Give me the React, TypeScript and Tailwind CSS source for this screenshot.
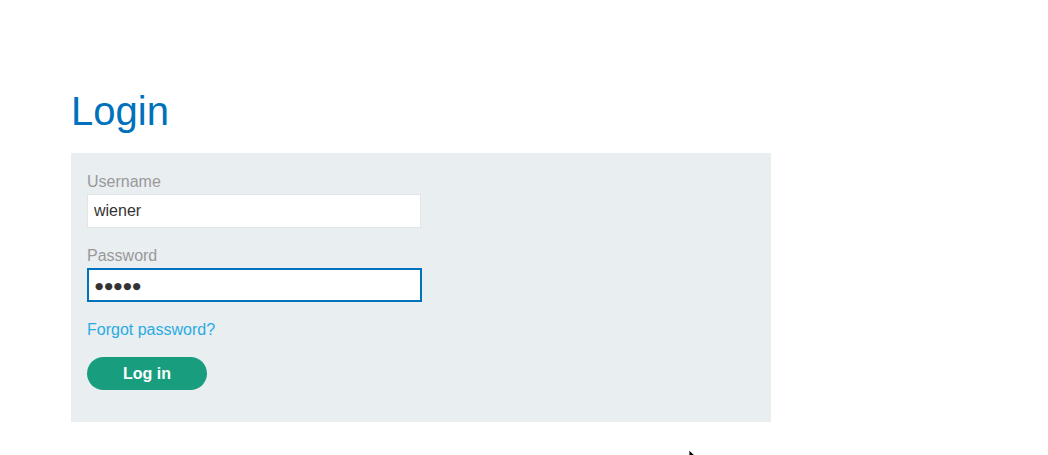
export default function App() {
  return (
    <div className="relative h-[455px] w-full overflow-hidden bg-white font-['Liberation_Sans',Arial,sans-serif]">
      <div className="ml-[71px] w-[700px] pt-[86px]">
        <h1 className="mb-[17px] text-[40px] leading-[50px] font-normal text-[#0071bc]">Login</h1>
        <form className="bg-[#e9eef1] px-4 pt-[17px] pb-8" onSubmit={(e) => e.preventDefault()}>
          <label className="block text-base leading-6 text-[#999]">Username</label>
          <input
            type="text"
            value="wiener"
            readOnly
            className="mb-4 block h-[34px] w-[334px] border border-[#e2e5e7] bg-white px-[6px] text-base text-[#333] outline-none"
          />
          <label className="block text-base leading-6 text-[#999]">Password</label>
          <input
            type="text"
            value="●●●●●"
            readOnly
            aria-label="Password"
            className="mb-4 block h-[34px] w-[335px] border-2 border-[#0071bc] bg-white px-[6px] font-['DejaVu_Sans',sans-serif] text-[9.5px] tracking-[1.1px] text-[#333] outline-none"
          />
          <a href="#" className="block text-base leading-6 text-[#29abe2]">
            Forgot password?
          </a>
          <button
            type="submit"
            className="mt-[15px] h-[33px] w-[120px] rounded-full bg-[#189e7e] text-base font-bold text-white"
          >
            Log in
          </button>
        </form>
      </div>
      <svg className="absolute top-[449px] left-[688px]" width="10" height="14" viewBox="0 0 10 14">
        <path d="M1 1 L1 12 L4 9 L6 13 L7.5 12.3 L5.5 8.5 L9 8.5 Z" fill="#000" stroke="#fff" strokeWidth="0.8" />
      </svg>
    </div>
  );
}
